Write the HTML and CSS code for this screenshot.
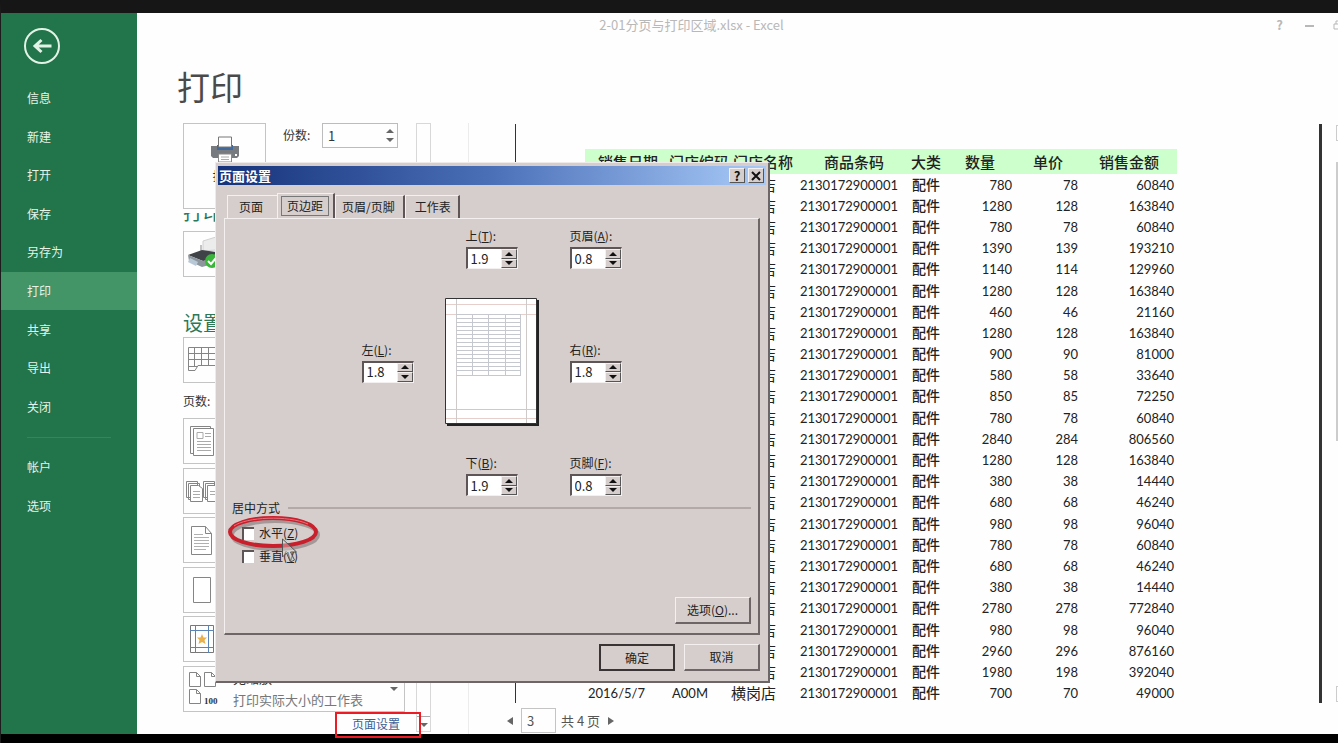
FILE: index.html
```html
<!DOCTYPE html>
<html lang="zh-CN">
<head>
    <meta charset="UTF-8">
    <meta name="viewport" content="width=device-width, initial-scale=1.0">
    <title>2-01分页与打印区域.xlsx - Excel</title>
    <link rel="stylesheet" href="styles.css">
</head>
<body>
    <div class="backstage">
        <nav class="sidebar">
            <button class="back" aria-label="返回">
                <svg width="38" height="38" viewBox="0 0 38 38" fill="none" stroke="#e2f3e6">
                    <circle cx="19" cy="19" r="17" stroke-width="2"/>
                    <path d="M28.500 19H12M18.500 13L12 19l6.500 6" stroke-width="3"/>
                </svg>
            </button>
            <ul class="menu">
                <li><a href="#">信息</a></li>
                <li><a href="#">新建</a></li>
                <li><a href="#">打开</a></li>
                <li><a href="#">保存</a></li>
                <li><a href="#">另存为</a></li>
                <li class="active"><a href="#">打印</a></li>
                <li><a href="#">共享</a></li>
                <li><a href="#">导出</a></li>
                <li><a href="#">关闭</a></li>
            </ul>
            <hr>
            <ul class="menu menu-small">
                <li><a href="#">帐户</a></li>
                <li><a href="#">选项</a></li>
            </ul>
        </nav>

        <main class="content">
            <header class="titlebar">
                <span class="file-name">2-01分页与打印区域.xlsx - Excel</span>
                <div class="window-buttons">
                    <button class="help">?</button>
                    <button aria-label="最小化"><svg width="10" height="10" viewBox="0 0 10 10"><path d="M0 6h9" stroke="#b8b8b8" stroke-width="2"/></svg></button>
                    <button aria-label="还原"><svg width="10" height="10" viewBox="0 0 10 10" fill="none" stroke="#b8b8b8"><path d="M1 4h6v5H1zM3 4V1h6v6H7"/></svg></button>
                </div>
            </header>
            <h1>打印</h1>
            <div class="columns">
                <section class="settings">
                    <div class="settings-main">
                        <div class="print-row">
                            <button class="print-button">
                                <svg width="30" height="28" viewBox="0 0 30 28">
                                    <path d="M1 10h28v10l-2 2H3l-2-2z" fill="#777b80"/>
                                    <path d="M7 9h16v5H7z" fill="#41699c"/>
                                    <path d="M8.500 1h13v10h-13z" fill="#fff" stroke="#777"/>
                                    <path d="M8.500 18h13v8h-13z" fill="#fff" stroke="#888"/>
                                    <path d="M11 21h8M11 23.500h8" stroke="#aaa"/>
                                    <path d="M25 18h2v2h-2z" fill="#fff"/>
                                </svg>
                                打印
                            </button>
                            <label for="copies">份数:</label>
                            <div class="copies">
                                <input type="text" id="copies" value="1">
                                <div class="arrows">
                                    <button aria-label="增加"><span class="up"></span></button>
                                    <button aria-label="减少"><span class="down"></span></button>
                                </div>
                            </div>
                        </div>
                        <h2 class="printer-title">打印机</h2>
                        <button class="option printer" aria-label="打印机">
                            <svg width="36" height="34" viewBox="0 0 36 34">
                                <path d="M17 4l13-4v13l-13 1z" fill="#ececec" stroke="#d0d0d0"/>
                                <path d="M15 8v6" stroke="#888"/>
                                <path d="M2 18l14-5 14 2-3 7-10 2z" fill="#3f4347"/>
                                <path d="M2 18l15 6 10-2v5l-11 3-13-6z" fill="#8d969d"/>
                                <path d="M4 21l8 4-2 4-8-4z" fill="#b9c8d6"/>
                                <circle cx="26" cy="24" r="7" fill="#3bb53a"/>
                                <path d="M22 24l3 3 5-6" fill="none" stroke="#fff" stroke-width="2"/>
                            </svg>
                        </button>
                        <h2 class="settings-title">设置</h2>
                        <button class="option" aria-label="打印区域">
                            <svg width="36" height="36" viewBox="0 0 36 36" fill="none" stroke="#858585">
                                <path d="M2.500 5.500H34v18H12l-3 5H2.500zM2.500 11.500H34M2.500 17.500H34M8.500 5v19M15.500 5v19M22.500 5v19M29.500 5v19M2.500 24.500h9"/>
                            </svg>
                        </button>
                        <p class="pages">页数:</p>
                        <div class="option-list">
                            <button class="option" aria-label="单面打印">
                                <svg width="36" height="36" viewBox="0 0 36 36" fill="#fff" stroke="#858585">
                                    <path d="M4.500 3.500h20v27h-20z"/>
                                    <path d="M7.500 5.500h20v27h-20z"/>
                                    <path d="M11 9.500h6v6h-6zM19 10.500h6M19 13.500h6M11 18.500h14M11 21.500h14M11 24.500h14M11 27.500h14" stroke="#aaa"/>
                                </svg>
                            </button>
                            <button class="option" aria-label="调整">
                                <svg width="36" height="36" viewBox="0 0 36 36" fill="#fff" stroke="#858585">
                                    <path d="M.5 8.500h11v16H.5zM2.500 10.500h11v16h-11z"/>
                                    <path d="M4.500 12.500h8l4 3v13h-12z"/>
                                    <path d="M7 18.500h7M7 21.500h7M7 24.500h7" stroke="#aaa"/>
                                    <path d="M17.500 8.500h11v16h-11zM19.500 10.500h11v16h-11z"/>
                                    <path d="M21.500 12.500h12v16h-12z"/>
                                    <path d="M24 18.500h7M24 21.500h7" stroke="#aaa"/>
                                </svg>
                            </button>
                            <button class="option" aria-label="纵向">
                                <svg width="36" height="36" viewBox="0 0 36 36" fill="#fff" stroke="#858585">
                                    <path d="M5.500 4.500h14l6 7v21h-20zM19.500 4.500v7h6"/>
                                    <path d="M8 12.500h9M8 15.500h15M8 18.500h15M8 21.500h15M8 24.500h15M8 27.500h12" stroke="#b0b0b0"/>
                                </svg>
                            </button>
                            <button class="option" aria-label="纸张">
                                <svg width="36" height="36" viewBox="0 0 36 36" fill="#fff" stroke="#858585">
                                    <path d="M7.500 5.500h17v25h-17z"/>
                                </svg>
                            </button>
                            <button class="option" aria-label="边距">
                                <svg width="36" height="36" viewBox="0 0 36 36" fill="none">
                                    <path d="M4.500 4.500h23v27h-23z" stroke="#777"/>
                                    <path d="M4 9.500h24M4 26.500h24M9.500 4v28M22.500 4v28" stroke="#5b83b3"/>
                                    <path d="M16 13l1.500 3.500h3.500l-2.500 2.500 1 4-3.500-2-3.500 2 1-4-2.500-2.500h3.500z" fill="#eab14b"/>
                                </svg>
                            </button>
                            <button class="option scaling">
                                <svg width="36" height="36" viewBox="0 0 36 36" fill="#fff" stroke="#858585">
                                    <path d="M3.500 1.500h7l4 4v10h-11zM10.500 1.500v4h4M18.500 1.500h7l4 4v10h-11zM25.500 1.500v4h4M3.500 18.500h7l4 4v10h-11zM10.500 18.500v4h4"/>
                                    <text x="18" y="33" class="icon-text">100</text>
                                </svg>
                                <span class="option-text">
                                    <strong>无缩放</strong>
                                    <span>打印实际大小的工作表</span>
                                </span>
                                <span class="down"></span>
                            </button>
                        </div>
                        <div class="page-setup">
                            <a href="#">页面设置</a>
                            <span class="mark"></span>
                        </div>
                    </div>
                    <div class="scrollbar">
                        <div class="thumb"></div>
                        <span class="down"></span>
                    </div>
                </section>

                <section class="preview">
                    <div class="sheet">
                        <table>
                            <thead>
                                <tr>
                                    <th class="date">销售日期</th>
                                    <th class="code">门店编码</th>
                                    <th class="shop">门店名称</th>
                                    <th class="barcode">商品条码</th>
                                    <th class="kind">大类</th>
                                    <th class="count">数量</th>
                                    <th class="price">单价</th>
                                    <th class="amount">销售金额</th>
                                </tr>
                            </thead>
                            <tbody id="rows"></tbody>
                        </table>
                    </div>
                    <div class="pager">
                        <button aria-label="上一页"><span class="left"></span></button>
                        <input type="text" value="3" aria-label="页码">
                        <span>共 4 页</span>
                        <button aria-label="下一页"><span class="right"></span></button>
                    </div>
                </section>
                <div class="edge">
                    <div class="edge-button"></div>
                    <div class="edge-thumb"></div>
                    <div class="edge-button edge-last"></div>
                </div>
            </div>
        </main>
    </div>
    <div class="bottom-bar"></div>

    <div class="dialog" role="dialog" aria-labelledby="dialogTitle">
        <div class="dialog-title">
            <span id="dialogTitle">页面设置</span>
            <button>?</button>
            <button aria-label="关闭"><svg width="10" height="10" viewBox="0 0 10 10"><path d="M1 1l8 8M9 1L1 9" stroke="#111" stroke-width="2"/></svg></button>
        </div>
        <div class="tabs">
            <button>页面</button>
            <button class="selected"><span>页边距</span></button>
            <button>页眉/页脚</button>
            <button>工作表</button>
        </div>
        <div class="panel">
            <div class="margins">
                <div class="field top">
                    <label for="top">上(<u>T</u>):</label>
                    <div class="spin"><input type="text" id="top" value="1.9"><div class="arrows"><button aria-label="增加"><span class="up"></span></button><button aria-label="减少"><span class="down"></span></button></div></div>
                </div>
                <div class="field head">
                    <label for="head">页眉(<u>A</u>):</label>
                    <div class="spin"><input type="text" id="head" value="0.8"><div class="arrows"><button aria-label="增加"><span class="up"></span></button><button aria-label="减少"><span class="down"></span></button></div></div>
                </div>
                <div class="field">
                    <label for="left">左(<u>L</u>):</label>
                    <div class="spin"><input type="text" id="left" value="1.8"><div class="arrows"><button aria-label="增加"><span class="up"></span></button><button aria-label="减少"><span class="down"></span></button></div></div>
                </div>
                <svg class="page" width="94" height="128" viewBox="0 0 94 128" fill="none">
                    <path d="M2 2h92v126H2z" fill="#222"/>
                    <path d="M.5.5h91v125H.5z" fill="#fff" stroke="#333"/>
                    <path d="M1 6.500h90M1 16.500h90M1 120.500h90" stroke="#e6cfca"/>
                    <path d="M1 111.500h90M11.500 1v124M81.500 1v124" stroke="#cfcaca"/>
                    <path d="M11 16.500h65M11 20.500h65M11 24.500h65M11 28.500h65M11 32.500h65M11 36.500h65M11 40.500h65M11 44.500h65M11 48.500h65M11 52.500h65M11 56.500h65M11 60.500h65M11 64.500h65M11 68.500h65M11 72.500h65M11 77.500h65M27.500 16v61M43.500 16v61M60.500 16v61M75.500 16v61" stroke="#c6c8d0"/>
                </svg>
                <div class="field">
                    <label for="right">右(<u>R</u>):</label>
                    <div class="spin"><input type="text" id="right" value="1.8"><div class="arrows"><button aria-label="增加"><span class="up"></span></button><button aria-label="减少"><span class="down"></span></button></div></div>
                </div>
                <div class="field top">
                    <label for="bottom">下(<u>B</u>):</label>
                    <div class="spin"><input type="text" id="bottom" value="1.9"><div class="arrows"><button aria-label="增加"><span class="up"></span></button><button aria-label="减少"><span class="down"></span></button></div></div>
                </div>
                <div class="field">
                    <label for="foot">页脚(<u>F</u>):</label>
                    <div class="spin"><input type="text" id="foot" value="0.8"><div class="arrows"><button aria-label="增加"><span class="up"></span></button><button aria-label="减少"><span class="down"></span></button></div></div>
                </div>
            </div>
            <fieldset>
                <legend>居中方式</legend>
                <label><input type="checkbox"> 水平(<u>Z</u>)</label>
                <label><input type="checkbox"> 垂直(<u>V</u>)</label>
                <svg class="circle" width="98" height="40" viewBox="0 0 98 40" fill="none">
                    <ellipse cx="49" cy="20" rx="43" ry="14" stroke="#5a4a4a" stroke-opacity=".4" stroke-width="4"/>
                    <ellipse cx="47" cy="17" rx="43" ry="14" stroke="#c8202c" stroke-width="4"/>
                    <path d="M8 11C20 2 62 0 82 9" stroke="#e8707a"/>
                </svg>
                <svg class="cursor" width="20" height="28" viewBox="0 0 20 28" fill="none">
                    <path d="M2.500 1v18l4-4 4 9 4-2-4-8h6z" fill="#e4dedc" fill-opacity=".4" stroke="#555"/>
                </svg>
            </fieldset>
            <button class="win-button">选项(<u>O</u>)...</button>
        </div>
        <div class="dialog-footer">
            <button class="win-button default">确定</button>
            <button class="win-button">取消</button>
        </div>
    </div>

    <script>
        // count, price, amount
        const sales = [
            [780, 78, 60840], [1280, 128, 163840], [780, 78, 60840], [1390, 139, 193210],
            [1140, 114, 129960], [1280, 128, 163840], [460, 46, 21160], [1280, 128, 163840],
            [900, 90, 81000], [580, 58, 33640], [850, 85, 72250], [780, 78, 60840],
            [2840, 284, 806560], [1280, 128, 163840], [380, 38, 14440], [680, 68, 46240],
            [980, 98, 96040], [780, 78, 60840], [680, 68, 46240], [380, 38, 14440],
            [2780, 278, 772840], [980, 98, 96040], [2960, 296, 876160], [1980, 198, 392040],
            [700, 70, 49000]
        ];
        document.getElementById('rows').innerHTML = sales.map(row =>
            `<tr><td class="date">2016/5/7</td><td class="code">A00M</td><td class="shop">横岗店</td>
            <td class="barcode">2130172900001</td><td class="kind">配件</td>
            <td class="count">${row[0]}</td><td class="price">${row[1]}</td><td class="amount">${row[2]}</td></tr>`
        ).join('');
    </script>
</body>
</html>
```
FILE: styles.css
```css
* {
    box-sizing: border-box;
}
body {
    margin: 0;
    min-height: 100vh;
    position: relative;
    display: flex;
    flex-direction: column;
    border-top: 13px solid #161616;
    border-left: 1px solid #1c1c1c;
    background: #fefefe;
    color: #333;
    font-family: "Noto Sans CJK SC", sans-serif;
    font-size: 12px;
    line-height: 16px;
}
button, input {
    margin: 0;
    padding: 0;
    border: 0;
    background: none;
    color: inherit;
    font: inherit;
}
svg {
    display: block;
}
h1, h2, p, ul {
    margin: 0;
    padding: 0;
    font-weight: normal;
}
a {
    color: inherit;
    text-decoration: none;
}
.up, .down, .left, .right {
    display: block;
    border: 4px solid transparent;
}
.up {
    border-top: 0;
    border-bottom-color: #666;
}
.down {
    border-bottom: 0;
    border-top-color: #666;
}
.left {
    border-left: 0;
    border-right: 6px solid #666;
}
.right {
    border-right: 0;
    border-left: 6px solid #666;
}

/* Backstage */
.backstage {
    flex: 1;
    display: flex;
}
.bottom-bar {
    height: 9px;
    background: #000;
}
.sidebar {
    flex: none;
    width: 136px;
    padding-top: 14px;
    background: #22744a;
    color: #e6f3ea;
}
.back {
    display: block;
    margin: 0 0 14px 22px;
}
.menu {
    display: grid;
    grid-auto-rows: 1fr;
    height: 347px;
    list-style: none;
}
.menu-small {
    height: 77px;
}
.menu li {
    display: flex;
    align-items: center;
    padding-left: 26px;
}
.menu .active {
    background: #439467;
}
.sidebar hr {
    margin: 11px 26px 10px;
    border: 0;
    border-top: 1px solid #37845a;
}
.content {
    flex: 1;
    min-width: 0;
    display: flex;
    flex-direction: column;
}
.titlebar {
    display: flex;
    justify-content: center;
    position: relative;
    overflow: hidden;
    height: 24px;
    padding: 4px 92px 0 0;
    color: #b8b8b8;
    font-size: 13px;
}
.window-buttons {
    position: absolute;
    right: -5px;
    top: 4px;
    display: flex;
    gap: 18px;
    font-weight: bold;
}
.help {
    margin-right: 4px;
}
h1 {
    padding: 26px 0 0 40px;
    font-size: 33px;
    line-height: 46px;
    color: #4a4a4a;
}
.columns {
    flex: 1;
    display: flex;
    padding-top: 14px;
}

/* Print settings */
.settings {
    flex: none;
    display: flex;
    width: 332px;
    padding-left: 46px;
    border-right: 1px solid #ececec;
}
.settings-main {
    width: 222px;
    margin-right: 11px;
}
.print-row {
    display: flex;
    align-items: flex-start;
}
.print-row label {
    padding: 4px 0 0 17px;
    width: 56px;
}
.print-button {
    display: flex;
    flex-direction: column;
    align-items: center;
    gap: 4px;
    width: 83px;
    height: 86px;
    padding-top: 12px;
    border: 1px solid #c4c4c4;
}
.copies {
    display: flex;
    width: 76px;
    height: 25px;
    border: 1px solid #bcbcbc;
}
.copies input {
    width: 63px;
    padding-left: 5px;
    font-size: 13px;
}
.copies .arrows {
    display: flex;
    flex-direction: column;
    justify-content: space-evenly;
}
.printer-title {
    display: flex;
    align-items: flex-end;
    height: 10px;
    margin-top: 4px;
    overflow: hidden;
    font-size: 20px;
    line-height: 22px;
    color: #2c7858;
}
.settings-title {
    padding-top: 32px;
    font-size: 20px;
    line-height: 28px;
    color: #2c7858;
}
.option {
    display: flex;
    align-items: center;
    width: 100%;
    height: 46px;
    padding-left: 2px;
    border: 1px solid #c4c4c4;
    text-align: left;
}
.printer {
    margin-top: 8px;
}
.pages {
    padding: 10px 0 9px;
}
.option-list {
    display: grid;
    grid-auto-rows: 1fr;
    height: 297px;
}
.option-text {
    flex: 1;
    padding-left: 11px;
    font-size: 13px;
    line-height: 22px;
    color: #777;
}
.option-text strong, .option-text span {
    display: block;
}
.option-text strong {
    font-weight: normal;
    color: #333;
}
.scaling .down {
    margin: 0 6px;
}
.icon-text {
    font: bold 9px "Liberation Serif", serif;
    fill: #333;
    stroke: none;
}
.page-setup {
    position: relative;
    display: flex;
    justify-content: flex-end;
    height: 18px;
    padding: 1px 5px 0 0;
    color: #3d5f94;
}
.mark {
    position: absolute;
    z-index: 1;
    top: -3px;
    right: -16px;
    width: 86px;
    height: 26px;
    border: 2px solid #ed1c24;
}
.scrollbar {
    display: flex;
    flex-direction: column;
    align-items: center;
    width: 15px;
    margin-bottom: 2px;
    border: 1px solid #d8d8d8;
}
.thumb {
    flex: 1;
    width: 100%;
    margin-bottom: 6px;
    border-bottom: 1px solid #aaa;
}
.scrollbar .down {
    margin-bottom: 4px;
}

/* Preview */
.preview {
    flex: 1;
    padding-left: 46px;
}
.sheet {
    height: 579px;
    margin-top: 1px;
    padding: 25px 0 0 69px;
    border-left: 1px solid #333;
    border-right: 3px solid #333;
}
.sheet table {
    table-layout: fixed;
    width: 592px;
    height: 555px;
    border-collapse: collapse;
    color: #222;
    font-family: Lato, "Noto Sans CJK SC", sans-serif;
    font-size: 13px;
    white-space: nowrap;
}
.sheet th, .sheet td {
    padding: 0;
    line-height: 16px;
}
.sheet th {
    height: 25px;
    background: #ccffcc;
    font-size: 15px;
    font-weight: 500;
    text-align: left;
}
.sheet th.date {
    width: 79px;
    padding-left: 13px;
}
.sheet th.code {
    width: 66px;
    padding-left: 5px;
}
.sheet th.shop {
    width: 65px;
    padding-left: 3px;
}
.sheet th.barcode {
    width: 110px;
    padding-left: 29px;
}
.sheet th.kind {
    width: 45px;
    padding-left: 6px;
}
.sheet th.count {
    width: 68px;
    padding-left: 15px;
}
.sheet th.price {
    width: 66px;
    padding-left: 15px;
}
.sheet th.amount {
    padding-left: 15px;
}
.sheet td.date {
    padding-left: 3px;
}
.sheet td.code {
    padding-left: 8px;
}
.sheet td.shop {
    padding-left: 1px;
    font-size: 15px;
}
.sheet td.kind {
    padding-left: 7px;
    font-size: 14px;
    font-weight: 500;
}
.sheet td.barcode, .sheet td.count, .sheet td.price {
    padding-right: 6px;
    text-align: right;
}
.sheet td.barcode {
    padding-right: 7px;
}
.sheet td.amount {
    padding-right: 3px;
    text-align: right;
}
.pager {
    display: flex;
    align-items: center;
    gap: 8px;
    margin: 5px 0 0 -8px;
    font-size: 13px;
    color: #555;
}
.pager input {
    width: 35px;
    height: 25px;
    padding-left: 5px;
    border: 1px solid #c4c4c4;
}
.pager span {
    margin-left: -3px;
}
.pager .left, .pager .right {
    margin: 0;
}
.edge {
    width: 2px;
    margin: 2px 0 0 14px;
    display: flex;
    flex-direction: column;
}
.edge-button {
    height: 16px;
    border: 1px solid #ccc;
    border-right: 0;
}
.edge-thumb {
    height: 279px;
    margin-top: 21px;
    background: #ccc;
}
.edge-last {
    margin: auto 0 32px;
}

/* Page setup dialog */
.dialog {
    position: absolute;
    left: 214px;
    top: 149px;
    width: 555px;
    padding: 3px 2px 10px;
    border: 1px solid #efebea;
    border-right: 2px solid #6e6666;
    border-bottom: 2px solid #6e6666;
    background: #d6cecc;
    color: #222;
}
.dialog-title {
    display: flex;
    align-items: center;
    gap: 3px;
    height: 19px;
    padding: 0 2px 0 1px;
    background: linear-gradient(90deg, #15327a, #4b70b8 50%, #a8caf8);
    color: #fff;
    font-size: 13px;
    font-weight: bold;
}
.dialog-title span {
    flex: 1;
}
.dialog-title button {
    display: flex;
    align-items: center;
    justify-content: center;
    width: 16px;
    height: 15px;
    border: 1px solid #f4f0ef;
    border-right-color: #555;
    border-bottom-color: #555;
    background: #d6cecc;
    color: #111;
}
.tabs {
    display: flex;
    align-items: flex-end;
    height: 33px;
    padding-left: 9px;
}
.tabs button {
    height: 23px;
    padding: 0 7px 0 9px;
    border: 1px solid #f4f0ef;
    border-right: 2px solid #5e5656;
    border-bottom: 0;
}
.tabs button:first-child {
    padding: 0 14px 0 11px;
    border-right: 0;
}
.tabs button:nth-child(3) {
    padding: 0 8px 0 6px;
}
.tabs .selected {
    height: 25px;
    padding: 0 4px 0 3px;
}
.selected span {
    display: block;
    padding: 1px 5px;
    border: 1px solid #777;
}
.panel {
    display: flex;
    flex-direction: column;
    margin: 0 6px;
    padding: 9px 7px;
    border: 1px solid #f4f0ef;
    border-right: 2px solid #6e6666;
    border-bottom: 2px solid #6e6666;
}
.margins {
    display: grid;
    grid-template-columns: 52px 94px 52px;
    gap: 29px 31px;
    justify-content: center;
    align-items: center;
}
.field {
    display: flex;
    flex-direction: column;
    gap: 3px;
}
.top {
    grid-column: 2;
    justify-self: center;
}
.head {
    grid-column: 3;
}
.spin {
    display: flex;
    width: 52px;
    height: 22px;
    border: 2px solid #5e5656;
    border-right: 1px solid #f4f0ef;
    border-bottom: 1px solid #f4f0ef;
    background: #fff;
}
.spin input {
    flex: 1;
    min-width: 0;
    padding-left: 3px;
    font-size: 13px;
}
.spin .arrows {
    display: flex;
    flex-direction: column;
    width: 16px;
}
.spin button {
    flex: 1;
    display: flex;
    align-items: center;
    justify-content: center;
    border: 1px solid #f4f0ef;
    border-right-color: #555;
    border-bottom-color: #555;
    background: #d6cecc;
}
.spin .up {
    border-bottom-color: #111;
}
.spin .down {
    border-top-color: #111;
}
fieldset {
    position: relative;
    display: flex;
    flex-direction: column;
    gap: 7px;
    margin: 4px 0 33px;
    padding: 9px 0 0 10px;
    border: 0;
    border-top: 2px solid #b3aaa8;
}
legend {
    margin-left: -10px;
    padding: 0 8px 0 0;
}
fieldset label {
    display: flex;
    align-items: center;
}
fieldset input {
    appearance: none;
    width: 12px;
    height: 13px;
    margin-right: 5px;
    border-top: 2px solid #5e5656;
    border-left: 2px solid #5e5656;
    background: #fff;
}
.circle {
    position: absolute;
    left: -6px;
    top: -1px;
}
.cursor {
    position: absolute;
    left: 48px;
    top: 22px;
}
.win-button {
    width: 76px;
    height: 27px;
    border: 1px solid #f4f0ef;
    border-right: 2px solid #6e6666;
    border-bottom: 2px solid #6e6666;
}
.panel .win-button {
    align-self: flex-end;
}
.default {
    border: 2px solid #3a3434;
}
.dialog-footer {
    display: flex;
    justify-content: flex-end;
    gap: 9px;
    padding: 9px 6px 0;
}
```
